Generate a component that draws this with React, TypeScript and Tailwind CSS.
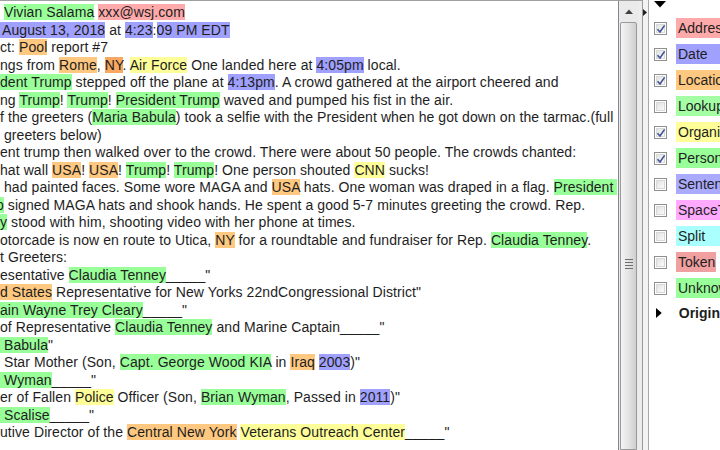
import React from "react";

type Seg = [string, string?];
type Line = { cls?: string; segs: Seg[] };

const P = "bg-[#99ff99]";
const A = "bg-[#ffaaaa]";
const D = "bg-[#a0a0ff]";
const L = "bg-[#ffc880]";
const LD = "bg-[#f8a860]";
const O = "bg-[#ffff99]";

const lines: Line[] = [
  { segs: [[" "], ["Vivian Salama", P], [" "], ["xxx@wsj.com", A]] },
  { segs: [["August 13, 2018", D + " pl-[2px]"], [" at "], ["4:23", D], [":"], ["09 PM EDT", D]] },
  { segs: [["ct: "], ["Pool", L], [" report #7"]] },
  {
    segs: [
      ["ngs from "],
      ["Rome", L],
      [", "],
      ["NY", LD],
      [". "],
      ["Air Force", O],
      [" One landed here at "],
      ["4:05pm", D],
      [" local."],
    ],
  },
  {
    segs: [
      ["dent Trump", P],
      [" stepped off the plane at "],
      ["4:13pm", D],
      [". A crowd gathered at the airport cheered and"],
    ],
  },
  {
    segs: [
      ["ng "],
      ["Trump", P],
      ["! "],
      ["Trump", P],
      ["! "],
      ["President Trump", P],
      [" waved and pumped his fist in the air."],
    ],
  },
  {
    segs: [
      ["f the greeters ("],
      ["Maria Babula", P],
      [") took a selfie with the President when he got down on the tarmac.(full"],
    ],
  },
  { segs: [[" greeters below)"]] },
  { segs: [["ent trump then walked over to the crowd. There were about 50 people. The crowds chanted:"]] },
  {
    segs: [
      ["hat wall "],
      ["USA", L],
      ["! "],
      ["USA", L],
      ["! "],
      ["Trump", P],
      ["! "],
      ["Trump", P],
      ["! One person shouted "],
      ["CNN", O],
      [" sucks!"],
    ],
  },
  {
    segs: [
      [" had painted faces. Some wore MAGA and "],
      ["USA", L],
      [" hats. One woman was draped in a flag. "],
      ["President ", P],
    ],
  },
  {
    cls: "ml-[-4px]",
    segs: [["p", P], [" signed MAGA hats and shook hands. He spent a good 5-7 minutes greeting the crowd. Rep."]],
  },
  { segs: [["y", P], [" stood with him, shooting video with her phone at times."]] },
  {
    segs: [
      ["otorcade is now en route to Utica, "],
      ["NY", L],
      [" for a roundtable and fundraiser for Rep. "],
      ["Claudia Tenney", P],
      ["."],
    ],
  },
  { segs: [["t Greeters:"]] },
  { segs: [["esentative "], ["Claudia Tenney", P], ["_____\""]] },
  { segs: [["d States", L], [" Representative for New Yorks 22ndCongressional District\""]] },
  { segs: [["ain Wayne Trey Cleary", P], ["_____\""]] },
  { segs: [["of Representative "], ["Claudia Tenney", P], [" and Marine Captain_____\""]] },
  { segs: [[" Babula", P], ["\""]] },
  {
    segs: [
      [" Star Mother (Son, "],
      ["Capt. George Wood KIA", P],
      [" in "],
      ["Iraq", L],
      [" "],
      ["2003", D],
      [")\""],
    ],
  },
  { segs: [[" Wyman", P], ["_____\""]] },
  {
    segs: [
      ["er of Fallen "],
      ["Police", O],
      [" Officer (Son, "],
      ["Brian Wyman", P],
      [", Passed in "],
      ["2011", D],
      [")\""],
    ],
  },
  { segs: [[" Scalise", P], ["_____\""]] },
  {
    segs: [
      ["utive Director of the "],
      ["Central New York", L],
      [" "],
      ["Veterans Outreach Center", O],
      ["_____\""],
    ],
  },
];

type Legend = { name: string; color: string; checked: boolean; w: string };
const legend: Legend[] = [
  { name: "Address", color: "bg-[#ffaaaa]", checked: true, w: "w-[80px]" },
  { name: "Date", color: "bg-[#a0a0ff]", checked: true, w: "w-[80px]" },
  { name: "Location", color: "bg-[#ffc880]", checked: true, w: "w-[80px]" },
  { name: "Lookup", color: "bg-[#a4ffa4]", checked: false, w: "w-[80px]" },
  { name: "Organization", color: "bg-[#ffff99]", checked: true, w: "w-[80px]" },
  { name: "Person", color: "bg-[#99ff99]", checked: true, w: "w-[80px]" },
  { name: "Sentence", color: "bg-[#aaaaff]", checked: false, w: "w-[80px]" },
  { name: "SpaceToken", color: "bg-[#ffaaff]", checked: false, w: "w-[80px]" },
  { name: "Split", color: "bg-[#aaffff]", checked: false, w: "w-[80px]" },
  { name: "Token", color: "bg-[#f0a0a0]", checked: false, w: "w-[40px]" },
  { name: "Unknown", color: "bg-[#99ff99]", checked: false, w: "w-[80px]" },
];

function CheckBox({ checked }: { checked: boolean }) {
  return (
    <div className="relative h-[13px] w-[13px] shrink-0 border border-[#8f8f8f] bg-white">
      <div className="absolute inset-[1px] border border-[#d8d8d8] bg-gradient-to-br from-[#e2e2e2] to-[#fbfbfb]" />
      {checked && (
        <svg className="absolute left-[1px] top-[1px]" width="10" height="10" viewBox="0 0 10 10">
          <path d="M1.5 5.2 L4 8 L8.6 1.4" fill="none" stroke="#3e5294" strokeWidth="1.6" />
        </svg>
      )}
    </div>
  );
}

export default function App() {
  return (
    <div className="flex h-[450px] w-[720px] overflow-hidden bg-white font-['Liberation_Sans',Arial,sans-serif] text-[#1e1e1e]">
      {/* left: text + scrollbar */}
      <div className="flex h-full w-[643px] shrink-0 border-t border-[#a0a0a0]">
        <div className="h-full w-[619px] shrink-0 overflow-hidden border-r border-[#828790] pt-[3px] text-[14px] leading-[17.5px] tracking-[0.08px]">
          {lines.map((ln, i) => (
            <div key={i} className={"whitespace-pre " + (ln.cls ?? "")}>
              {ln.segs.map((s, j) => (
                <span key={j} className={s[1] ?? ""}>
                  {s[0]}
                </span>
              ))}
            </div>
          ))}
        </div>
        {/* scrollbar */}
        <div className="flex h-full w-[19px] shrink-0 flex-col bg-[#eaeaea]">
          <div className="flex h-[21px] items-center justify-center">
            <svg width="8" height="5" viewBox="0 0 8 5">
              <path d="M0 5 L4 0.5 L8 5 Z" fill="#404040" />
            </svg>
          </div>
          <div className="relative ml-[1px] w-[17px] flex-1 rounded-t-[2px] border border-[#9a9a9a] bg-gradient-to-r from-[#f4f4f4] via-[#e4e4e4] to-[#cfcfcf]">
            <div className="absolute left-[4px] top-[236px] flex w-[8px] flex-col gap-[2px]">
              <div className="h-[1px] bg-[#6f6f6f]" />
              <div className="h-[1px] bg-[#6f6f6f]" />
              <div className="h-[1px] bg-[#6f6f6f]" />
              <div className="h-[1px] bg-[#6f6f6f]" />
            </div>
          </div>
        </div>
        <div className="h-full w-[5px] shrink-0 border-r border-[#9a9a9a] bg-[#ececec]" />
      </div>
      {/* splitter */}
      <div className="flex h-full w-[6px] shrink-0 flex-col border-r border-[#a8a8a8] bg-[#f3f3f3] pt-[9px]">
        <svg width="4" height="7" viewBox="0 0 4 7">
          <path d="M0 0 L4 3.5 L0 7 Z" fill="#202020" />
        </svg>
      </div>
      {/* legend */}
      <div className="flex h-full flex-1 flex-col overflow-hidden bg-white pl-[5px] text-[14px]">
        <div className="h-[15px] pt-[1px]">
          <svg width="12" height="7" viewBox="0 0 12 7">
            <path d="M0 0 L12 0 L6 6.5 Z" fill="#000" />
          </svg>
        </div>
        {legend.map((it) => (
          <div key={it.name} className="flex h-[26px] items-center gap-[9px]">
            <CheckBox checked={it.checked} />
            <div className={"flex h-[20px] shrink-0 items-center whitespace-nowrap pl-[2px] " + it.color + " " + it.w}>
              {it.name}
            </div>
          </div>
        ))}
        <div className="flex h-[24px] items-center gap-[17px] pl-[2px]">
          <svg width="7" height="12" viewBox="0 0 7 12">
            <path d="M0 0 L7 6 L0 12 Z" fill="#000" />
          </svg>
          <span className="font-bold">Origin</span>
        </div>
      </div>
    </div>
  );
}
